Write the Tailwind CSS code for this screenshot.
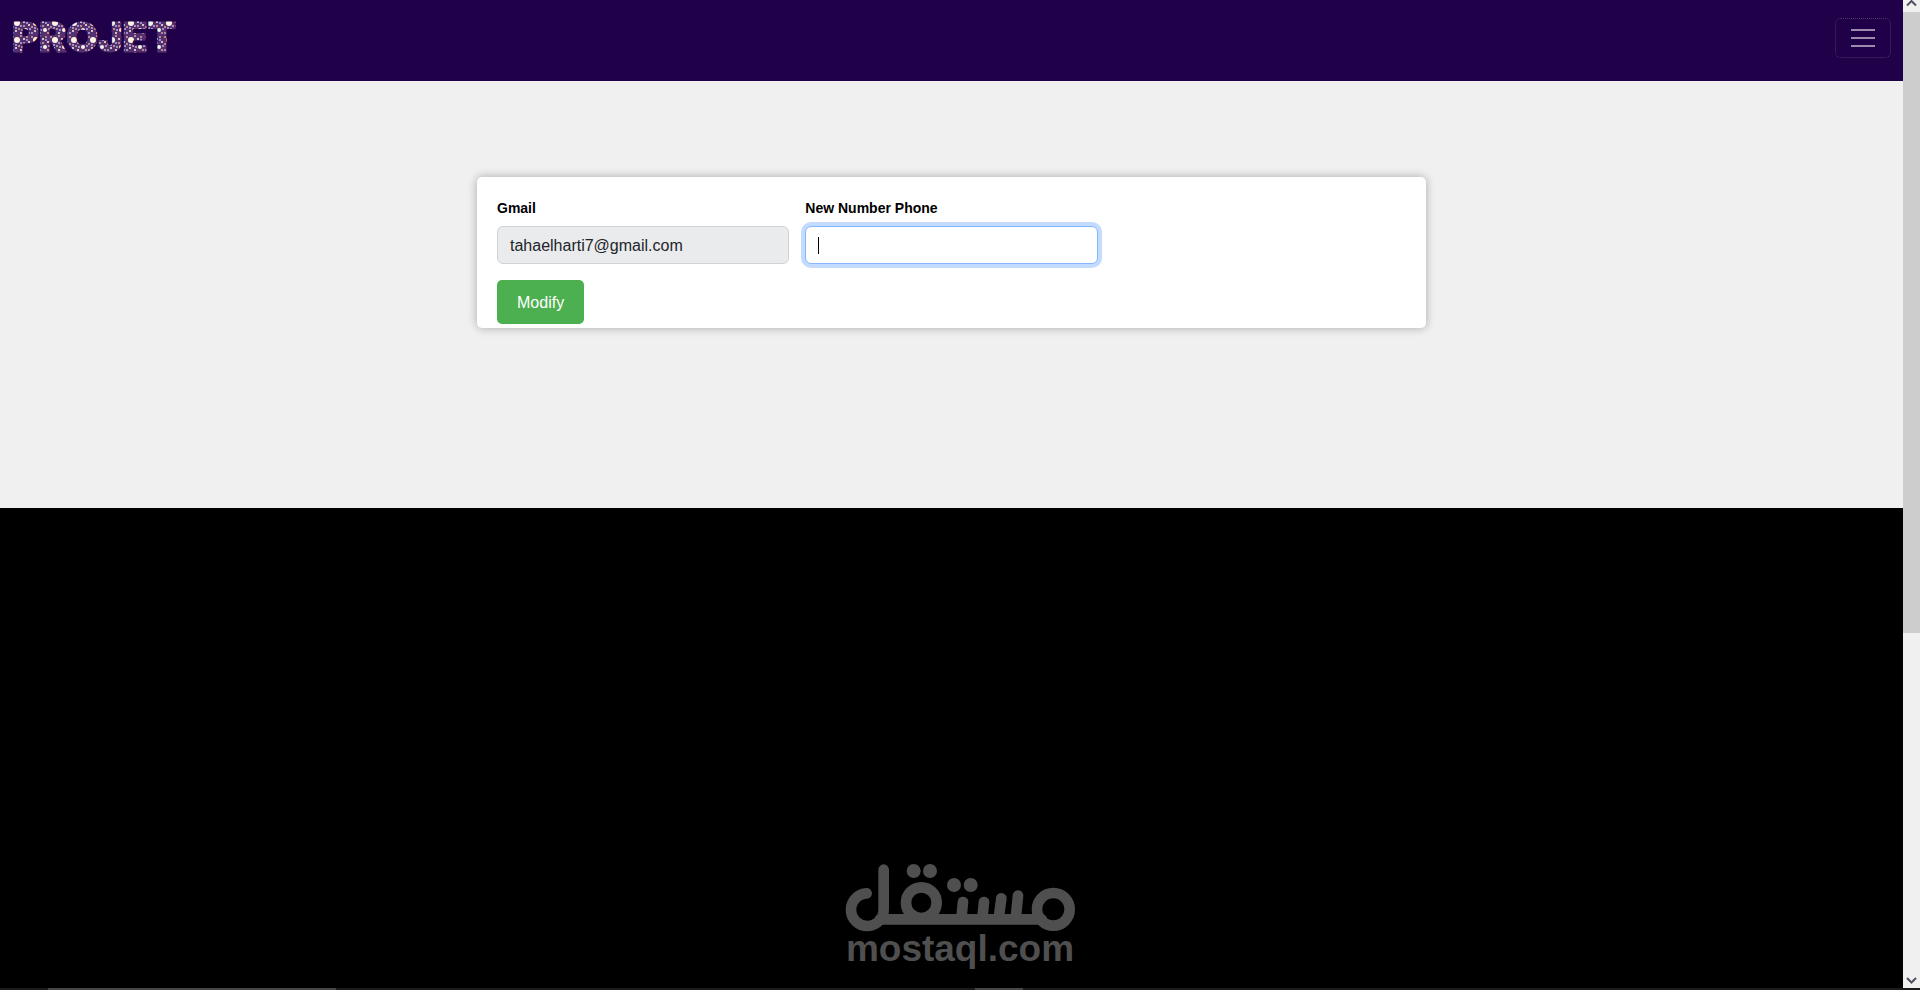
<!DOCTYPE html>
<html lang="en">
<head>
  <meta charset="UTF-8" />
  <meta name="viewport" content="width=device-width, initial-scale=1.0"/>
  <title>Projet</title>
  <script src="https://cdn.jsdelivr.net/npm/@tailwindcss/browser@4"></script>
</head>
<body class="relative min-h-screen flex flex-col bg-black font-['Liberation_Sans',Arial,sans-serif] text-base text-[#212529]">
  <div class="flex-1 flex">
    <div class="flex-1">
      <!-- Navbar -->
      <header class="h-[81px] bg-[#1f0049] px-3 pt-[18px] flex justify-between items-start">
        <a href="#" aria-label="PROJET">
          <svg class="w-[200px] h-12 overflow-visible" viewBox="0 0 200 48">
            <defs>
              <pattern id="dots" width="19" height="17" patternUnits="userSpaceOnUse">
                <rect width="19" height="17" fill="#553070"/>
                <g fill="#fbf3e2">
                  <circle cx="5" cy="5" r="3"/>
                  <circle cx="14" cy="12" r="2"/>
                  <circle cx="12" cy="4" r="1"/>
                  <circle cx="4" cy="13" r="1"/>
                  <circle cx="17" cy="7" r="1"/>
                  <circle cx="9" cy="15" r="1"/>
                </g>
                <g fill="#e0a596">
                  <circle cx="1" cy="2" r="1"/>
                  <circle cx="9" cy="1" r="1"/>
                  <circle cx="15" cy="2" r="1"/>
                  <circle cx="1" cy="9" r="1"/>
                  <circle cx="12" cy="8" r="1"/>
                  <circle cx="7" cy="11" r="1"/>
                  <circle cx="17" cy="15" r="1"/>
                </g>
                <g fill="#b4b0e8">
                  <circle cx="9" cy="8" r="1"/>
                  <circle cx="4" cy="10" r="1"/>
                  <circle cx="10" cy="12" r="1"/>
                  <circle cx="1" cy="15" r="1"/>
                  <circle cx="15" cy="5" r="1"/>
                  <circle cx="18" cy="11" r="1"/>
                </g>
              </pattern>
            </defs>
            <text x="0" y="34" fill="url(#dots)" stroke="url(#dots)" stroke-width="1" class="font-[Inter,sans-serif] font-black text-[41px]">PROJET</text>
          </svg>
        </a>
        <button type="button" aria-label="Toggle navigation" class="w-14 h-10 rounded-md border border-dotted border-white/20 flex flex-col items-center justify-center gap-[6px]">
          <span class="w-6 h-[2px] bg-white/55"></span>
          <span class="w-6 h-[2px] bg-white/55"></span>
          <span class="w-6 h-[2px] bg-white/55"></span>
        </button>
      </header>

      <!-- Form -->
      <main class="h-[427px] bg-[#f0f0f0] pt-24">
        <form class="w-1/2 max-w-[949px] mx-auto bg-white rounded-[5px] px-5 pt-5 pb-1 shadow-[0_0_10px_rgba(0,0,0,0.3)]">
          <div class="grid grid-cols-3 gap-4">
            <div>
              <label for="gmail" class="block pt-px mb-[7px] text-sm leading-[21px] font-bold text-black">Gmail</label>
              <input type="email" id="gmail" value="tahaelharti7@gmail.com" readonly class="block w-full h-[38px] px-3 pt-[2px] rounded-md border border-[#ced4da] bg-[#eaebed]">
            </div>
            <div>
              <label for="phone" class="block pt-px mb-[7px] text-sm leading-[21px] font-bold text-black">New Number Phone</label>
              <div class="relative">
                <input type="text" id="phone" class="block w-full h-[38px] px-3 pt-[2px] rounded-md border border-[#86b7fe] bg-white outline-none caret-transparent ring-4 ring-[#c2dbfe]">
                <span class="absolute left-[13px] top-[11px] w-px h-[17px] bg-black"></span>
              </div>
            </div>
          </div>
          <button type="button" class="mt-4 h-11 px-5 pt-[2px] rounded-[5px] bg-[#4caf50] text-white">Modify</button>
        </form>
      </main>
    </div>

    <!-- Scrollbar -->
    <aside class="w-[17px] bg-[#f0f0f0] flex flex-col items-center">
      <svg class="w-[17px] h-3" viewBox="0 0 17 12" fill="none" stroke="#505060" stroke-width="2">
        <path d="M4 5.500L8.500 1L13 5.500"/>
      </svg>
      <div class="w-full h-[621px] bg-[#cdcdcd]"></div>
      <svg class="w-[17px] h-4 mt-auto" viewBox="0 0 17 16" fill="none" stroke="#505060" stroke-width="2">
        <path d="M4 6L8.500 10.500L13 6"/>
      </svg>
    </aside>
  </div>

  <!-- Taskbar edge -->
  <footer class="h-[2px] bg-[#1e1a1b] flex">
    <div class="w-[15%] ml-[48px] bg-[#484646]"></div>
    <div class="w-12 ml-[639px] bg-[#484646]"></div>
  </footer>

  <!-- Watermark -->
  <div class="absolute bottom-6 left-1/2 -translate-x-1/2 text-[#4f4f4f]">
    <svg class="block w-[230px] h-[68px]" viewBox="75 42 690 204" fill="none" stroke="currentColor" stroke-width="32" stroke-linecap="round" role="img" aria-label="مستقل">
      <path d="M140 130A49 49 0 1 0 191 178V59"/>
      <path d="M180 208H665"/>
      <circle cx="304" cy="158" r="46"/>
      <circle cx="700" cy="178" r="49"/>
      <path d="M429 156L424 206M492 156L487 206M544 145L536 206M594 137L587 206"/>
      <g fill="currentColor" stroke="none">
        <circle cx="281" cy="63" r="21"/>
        <circle cx="330" cy="63" r="21"/>
        <circle cx="402" cy="105" r="21"/>
        <circle cx="452" cy="105" r="21"/>
      </g>
    </svg>
    <p class="text-center text-[37px] leading-[34px] font-bold">mostaql.com</p>
  </div>
</body>
</html>
